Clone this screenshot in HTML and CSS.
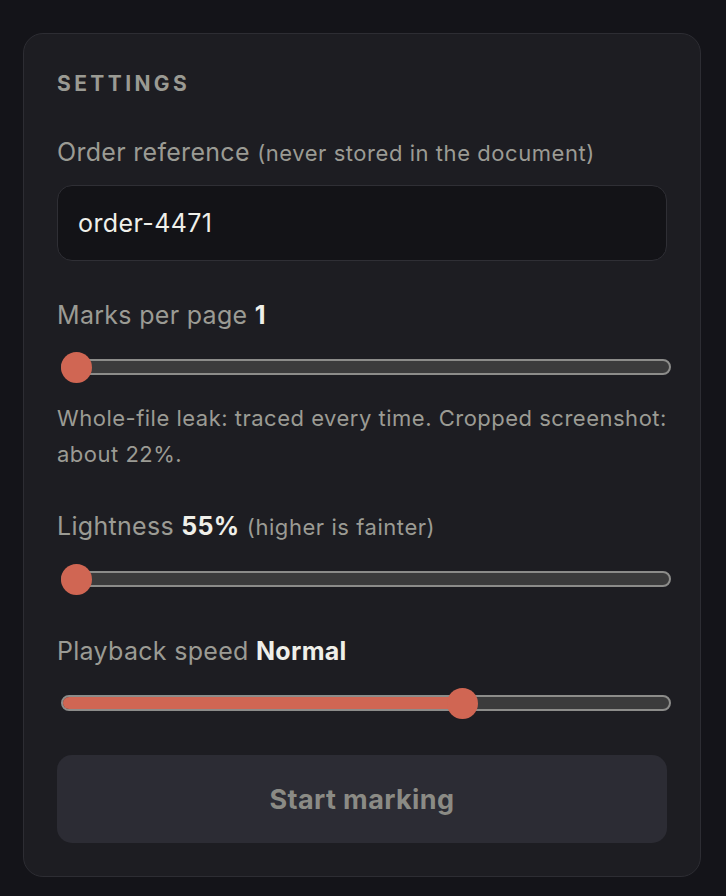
FILE: index.html
```html
<!DOCTYPE html>
<html lang="en">
<head>
<meta charset="utf-8">
<title>Settings</title>
<link rel="stylesheet" href="styles.css">
</head>
<body>
  <section class="card">
    <h2 class="heading">SETTINGS</h2>

    <div class="field">
      <label class="label">Order reference <span class="hint">(never stored in the document)</span></label>
      <div class="input">order-4471</div>
    </div>

    <div class="field field-gap">
      <div class="label">Marks per page <b class="val">1</b></div>
      <div class="slider">
        <div class="track"><div class="fill" style="width: 16px"></div></div>
        <div class="thumb" style="left: 0px"></div>
      </div>
      <p class="help">Whole-file leak: traced every time. Cropped screenshot: about 22%.</p>
    </div>

    <div class="field field-gap">
      <div class="label">Lightness <b class="val">55%</b> <span class="hint">(higher is fainter)</span></div>
      <div class="slider">
        <div class="track"><div class="fill" style="width: 16px"></div></div>
        <div class="thumb" style="left: 0px"></div>
      </div>
    </div>

    <div class="field field-gap2">
      <div class="label">Playback speed <b class="val">Normal</b></div>
      <div class="slider">
        <div class="track"><div class="fill" style="width: 402px"></div></div>
        <div class="thumb" style="left: 386px"></div>
      </div>
    </div>

    <button class="btn" type="button">Start marking</button>
  </section>
</body>
</html>
```

FILE: styles.css
```css
* { box-sizing: border-box; }

html, body {
  margin: 0;
  padding: 0;
  background: #141419;
}

body {
  padding: 33px 25px 18px 23px;
  font-family: Inter, "Liberation Sans", sans-serif;
  color: #9b9b94;
}

.card {
  width: 678px;
  background: #1d1d22;
  border: 1px solid #2d2d33;
  border-radius: 20px;
  padding: 37px 33px 33px 33px;
}

.heading {
  margin: 0;
  font-size: 21px;
  line-height: 26px;
  font-weight: 700;
  letter-spacing: 3.4px;
  color: #9a9a93;
}

.field { margin-top: 40px; }
.field-gap { margin-top: 39px; }
.field-gap2 { margin-top: 41px; }

.label {
  display: block;
  font-size: 25px;
  line-height: 30px;
  letter-spacing: 0.3px;
  color: #9b9b94;
}

.hint {
  font-size: 22px;
  letter-spacing: 0.55px;
}

.val {
  font-weight: 700;
  color: #efefe9;
}

.input {
  margin-top: 17px;
  height: 76px;
  background: #131317;
  border: 1.5px solid #2f2f35;
  border-radius: 15px;
  padding: 0 20px;
  display: flex;
  align-items: center;
  font-size: 25px;
  letter-spacing: 0.4px;
  color: #f0f0ea;
}

.slider {
  position: relative;
  margin-top: 21px;
  margin-left: 4px;
  width: 610px;
  height: 32px;
  display: flex;
  align-items: center;
}

.track {
  width: 100%;
  height: 16px;
  border: 2px solid #8c8c8a;
  border-radius: 8px;
  background: #3b3b3c;
  overflow: hidden;
}

.fill {
  height: 100%;
  background: #d06653;
}

.thumb {
  position: absolute;
  top: 0.5px;
  width: 31px;
  height: 31px;
  border-radius: 50%;
  background: #d06653;
}

.help {
  margin: 17px 0 0 0;
  font-size: 22px;
  line-height: 36px;
  letter-spacing: 0.5px;
  color: #9b9b94;
}

.btn {
  display: block;
  width: 100%;
  margin-top: 36px;
  height: 88px;
  border: none;
  border-radius: 15px;
  background: #2c2c34;
  color: #8b8b85;
  font-family: Inter, "Liberation Sans", sans-serif;
  font-size: 27px;
  letter-spacing: 0.4px;
  font-weight: 700;
}
```
